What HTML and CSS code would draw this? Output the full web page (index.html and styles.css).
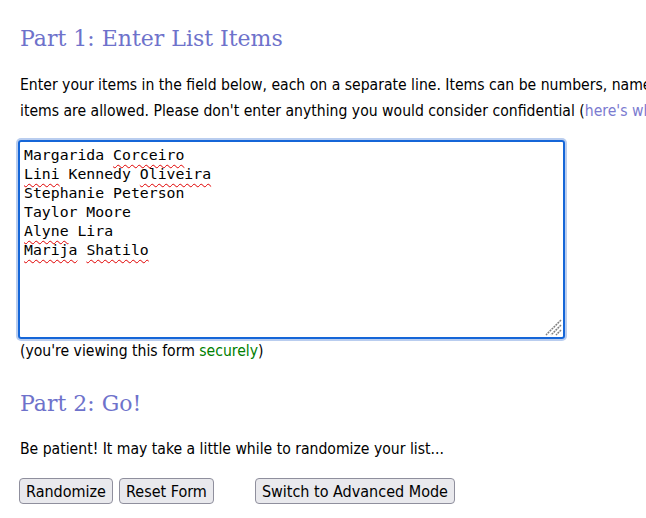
FILE: index.html
```html
<!DOCTYPE html>
<html lang="en">
  <head>
    <meta charset="UTF-8" />
    <meta name="viewport" content="width=device-width, initial-scale=1.0" />
    <title>List Randomizer</title>
    <link rel="stylesheet" href="styles.css">
  </head>

  <body>
    <div class="page">
      <h2 class="part-header">Part 1: Enter List Items</h2>

      <p class="intro">
        Enter your items in the field below, each on a separate line. Items can be numbers, names, email addresses, etc. A maximum of 10,000<br>
        items are allowed. Please don't enter anything you would consider confidential (<a href="#" class="why-link">here's why</a>).
      </p>

      <form id="list_form" action="" name="list_form" method="GET">
        <div class="list-box" contenteditable="true" spellcheck="false">
          <div>Margarida <span class="typo">Corceiro</span></div>
          <div><span class="typo">Lini</span> Kennedy <span class="typo">Oliveira</span></div>
          <div>Stephanie Peterson</div>
          <div>Taylor Moore</div>
          <div><span class="typo">Alyne</span> Lira</div>
          <div><span class="typo">Marija</span> <span class="typo">Shatilo</span></div>
          <svg class="grip" width="18" height="18" viewBox="0 0 18 18">
            <path d="M17 2 L2 17 M17 7 L7 17 M17 12 L12 17" stroke="#808080" stroke-width="1.5" stroke-dasharray="2 0.8" />
          </svg>
        </div>
        <div class="secure-note">(you're viewing this form <span class="secure">securely</span>)</div>

        <h2 class="part-header part-two">Part 2: Go!</h2>

        <p class="patient">Be patient! It may take a little while to randomize your list...</p>

        <div class="button-row">
          <button type="submit">Randomize</button>
          <button type="reset">Reset Form</button>
          <button type="button" class="advanced">Switch to Advanced Mode</button>
        </div>
      </form>
    </div>
  </body>
</html>
```

FILE: styles.css
```css
html {
  overflow: hidden;
}
body {
  margin: 0;
  background: white;
  font-family: 'DejaVu Sans Condensed', 'Liberation Sans', sans-serif;
  font-size: 15.6px;
  color: black;
}
.page {
  width: 900px;
  padding: 0 0 0 20px;
}
.part-header {
  font-family: 'DejaVu Serif', 'Liberation Serif', serif;
  font-weight: normal;
  font-size: 22px;
  color: #6e72cb;
  margin: 24px 0 0;
  line-height: 30px;
}
.intro {
  margin: 18px 0 0;
  line-height: 26px;
  white-space: nowrap;
}
.why-link {
  color: #7b7bd0;
  text-decoration: none;
}
form {
  margin-top: 16px;
}
.list-box {
  position: relative;
  box-sizing: border-box;
  width: 547px;
  height: 199px;
  margin-left: -2px;
  padding: 3px 4px;
  border: 2px solid #1566d8;
  border-radius: 3px;
  box-shadow: 0 0 0 2px #b9cdef;
  font-family: 'DejaVu Sans Mono', 'Liberation Mono', monospace;
  font-size: 14.8px;
  line-height: 19px;
  outline: none;
}
.typo {
  text-decoration: underline wavy #e00000;
  text-decoration-thickness: 1px;
  text-underline-offset: 4px;
}
.grip {
  position: absolute;
  right: 1px;
  bottom: 1px;
}
.secure-note {
  margin-top: 2px;
  line-height: 20px;
}
.secure {
  color: #008000;
}
.part-two {
  margin-top: 28px;
}
.patient {
  margin: 20px 0 0;
  line-height: 20px;
}
.button-row {
  display: flex;
  margin-top: 19px;
  margin-left: -1px;
  gap: 6px;
}
button {
  font-family: inherit;
  font-size: 16px;
  padding: 1px 6px;
  height: 26px;
  background: #e9e9ed;
  border: 1px solid #8f8f9d;
  border-radius: 4px;
  color: black;
}
.advanced {
  margin-left: 35px;
}
```
